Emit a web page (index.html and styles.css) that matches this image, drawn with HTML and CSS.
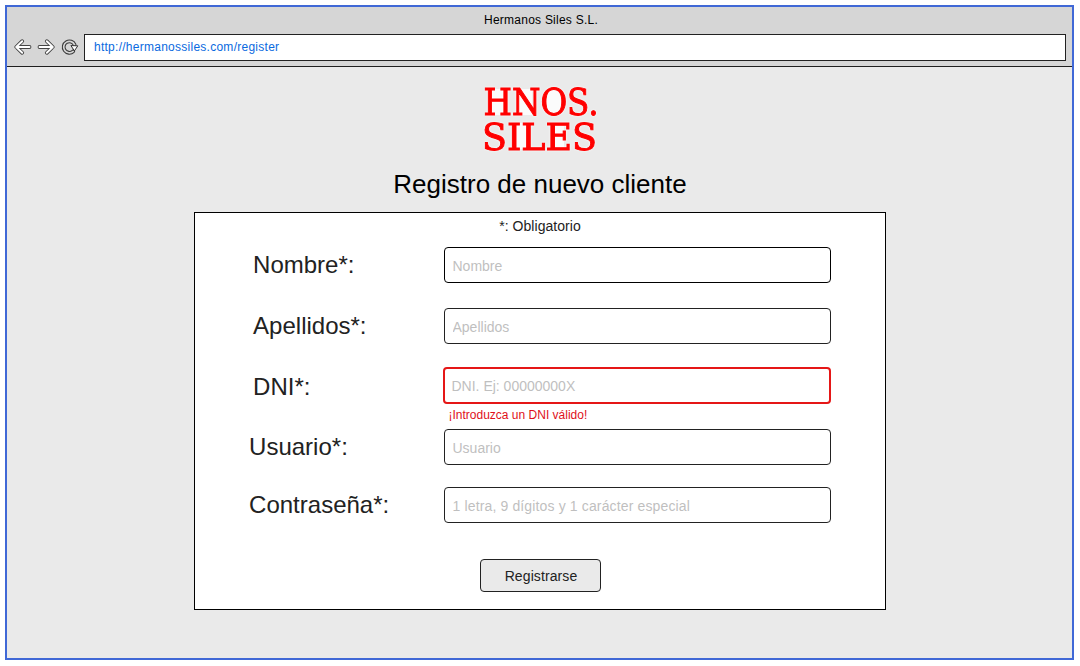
FILE: index.html
```html
<!DOCTYPE html>
<html lang="es">
<head>
<meta charset="utf-8">
<title>Hermanos Siles S.L.</title>
<link rel="stylesheet" href="styles.css">
</head>
<body>
<div class="window">
  <header class="chrome">
    <div class="chrome-title">Hermanos Siles S.L.</div>
    <div class="toolbar">
      <svg class="nav-icons" width="68" height="20" viewBox="12 37 68 20">
        <g class="icon-outline">
          <path d="M22.200 41.200 16.200 47l6 5.800M16.500 47H29.500"/>
          <path d="M46.800 41.200 52.800 47l-6 5.800M52.500 47H39.500"/>
        </g>
        <g class="icon-fill">
          <path d="M22.200 41.200 16.200 47l6 5.800M16.500 47H29.500"/>
          <path d="M46.800 41.200 52.800 47l-6 5.800M52.500 47H39.500"/>
        </g>
        <path class="reload-outline" d="M73.200 51.300A5.700 5.700 0 1 1 74.600 44.800"/>
        <path class="reload-fill" d="M73.200 51.300A5.700 5.700 0 1 1 74.600 44.800"/>
        <path class="reload-head" d="M71.300 45.600l6.500.2-3.200 4.800z"/>
      </svg>
      <div class="address">http://hermanossiles.com/register</div>
    </div>
  </header>
  <main class="page">
    <svg class="logo" width="130" height="80" viewBox="475 79 130 80">
      <g class="logo-light">
        <path d="M490 89h14v26h-14zM517 89h15v26h-15zM516 123h12v26h-12zM552 124h12v24h-12z"/>
        <ellipse cx="553" cy="102" rx="9" ry="12"/>
      </g>
      <g class="logo-text">
        <text x="483.500" y="115" textLength="115" lengthAdjust="spacingAndGlyphs">HNOS.</text>
        <text x="482" y="149.500" textLength="115" lengthAdjust="spacingAndGlyphs">SILES</text>
      </g>
    </svg>
    <h1 class="title">Registro de nuevo cliente</h1>
    <form class="panel">
      <p class="note">*: Obligatorio</p>
      <div class="field field-first">
        <label class="label" for="nombre">Nombre*:</label>
        <input class="input input-dark" id="nombre" placeholder="Nombre">
      </div>
      <div class="field">
        <label class="label" for="apellidos">Apellidos*:</label>
        <input class="input" id="apellidos" placeholder="Apellidos">
      </div>
      <div class="field field-dni">
        <label class="label" for="dni">DNI*:</label>
        <input class="input input-error" id="dni" placeholder="DNI. Ej: 00000000X">
      </div>
      <p class="error">¡Introduzca un DNI válido!</p>
      <div class="field field-user">
        <label class="label" for="usuario">Usuario*:</label>
        <input class="input" id="usuario" placeholder="Usuario">
      </div>
      <div class="field field-pass">
        <label class="label" for="clave">Contraseña*:</label>
        <input class="input input-pass" id="clave" placeholder="1 letra, 9 dígitos y 1 carácter especial">
      </div>
      <button class="submit" type="button">Registrarse</button>
    </form>
  </main>
</div>
</body>
</html>
```
FILE: styles.css
```css
* { box-sizing: border-box; }
body {
  margin: 0;
  padding: 5px;
  background: #fff;
  font-family: "Liberation Sans", Arial, sans-serif;
  color: #222;
}
.window {
  width: 1069px;
  height: 655px;
  border: 2px solid #4068d6;
  display: flex;
  flex-direction: column;
}
.chrome {
  height: 60px;
  background: #d6d6d6;
  border-bottom: 1px solid #1f1f1f;
}
.chrome-title {
  height: 27px;
  padding-left: 3px;
  line-height: 26px;
  text-align: center;
  font-size: 12px;
  letter-spacing: .24px;
  color: #000;
}
.toolbar { display: flex; padding: 0 6px 0 5px; }
.nav-icons { margin: 3px 4px 0 0; flex: none; }
.nav-icons path { fill: none; stroke-linecap: round; stroke-linejoin: round; }
.icon-outline { stroke: #444; stroke-width: 3.8; }
.icon-fill { stroke: #fff; stroke-width: 1.9; }
.nav-icons .reload-outline { stroke: #3a3a3a; stroke-width: 3.8; }
.nav-icons .reload-fill { stroke: #d6d6d6; stroke-width: 1.7; }
.nav-icons .reload-head { fill: #fff; stroke: #333; stroke-width: 1; }
.address {
  flex: 1;
  height: 27px;
  border: 1px solid #222;
  background: #fff;
  padding-left: 9px;
  line-height: 25px;
  font-size: 12px;
  letter-spacing: .26px;
  color: #0a6ae0;
}
.page {
  flex: 1;
  background: #eaeaea;
  display: flex;
  flex-direction: column;
  align-items: center;
  padding-top: 12px;
}
.logo { display: block; overflow: visible; }
.logo-light { fill: #fbfbfb; }
.logo-text {
  font-family: "DejaVu Serif Condensed", "DejaVu Serif", serif;
  font-size: 37px;
  fill: #f00;
  stroke: #f00;
  stroke-width: .9px;
  filter: drop-shadow(0 0 1px #fff);
}
.title {
  margin: 7px 0 0;
  padding-left: 1px;
  height: 46px;
  line-height: 36px;
  font-size: 26px;
  font-weight: 400;
  color: #000;
}
.panel {
  width: 692px;
  height: 398px;
  border: 1px solid #000;
  background: #fff;
  display: flex;
  flex-direction: column;
}
.note {
  margin: 0;
  height: 34px;
  padding-left: 1px;
  line-height: 27px;
  font-size: 14px;
  letter-spacing: .05px;
  text-align: center;
}
.field {
  display: flex;
  align-items: flex-start;
  height: 36px;
  margin-bottom: 25px;
  padding-left: 58px;
}
.field-dni { height: 37px; margin: -2px 0 0; }
.label {
  width: 191px;
  padding-left: .6px;
  line-height: 36px;
  font-size: 24px;
}
.input {
  width: 387px;
  height: 36px;
  margin: 0;
  padding: 2px 8px 0;
  border: 1px solid #222;
  border-radius: 4px;
  background: #fff;
  font: 14px "Liberation Sans", Arial, sans-serif;
  outline: none;
}
.input::placeholder { color: #bfbfbf; opacity: 1; }
.input-dark { border-color: #000; }
.input-pass { letter-spacing: .14px; }
.field-dni .label { width: 190px; line-height: 40px; }
.input-error { width: 388px; height: 37px; padding: 1px 7px 0; border: 2px solid #e51717; }
.error {
  margin: 0 0 0 254px;
  height: 25px;
  line-height: 22px;
  font-size: 12px;
  color: #e0101a;
}
.field-user, .field-pass { padding-left: 54px; }
.field-user .label, .field-pass .label { width: 195px; }
.field-user { margin-bottom: 22px; }
.field-pass { margin-bottom: 36px; }
.submit {
  width: 121px;
  height: 33px;
  margin-left: 285px;
  padding: 0 0 0 2px;
  border: 1px solid #222;
  border-radius: 4px;
  background: #eaeaea;
  font: 14px "Liberation Sans", Arial, sans-serif;
  letter-spacing: .1px;
  color: #222;
}
```
